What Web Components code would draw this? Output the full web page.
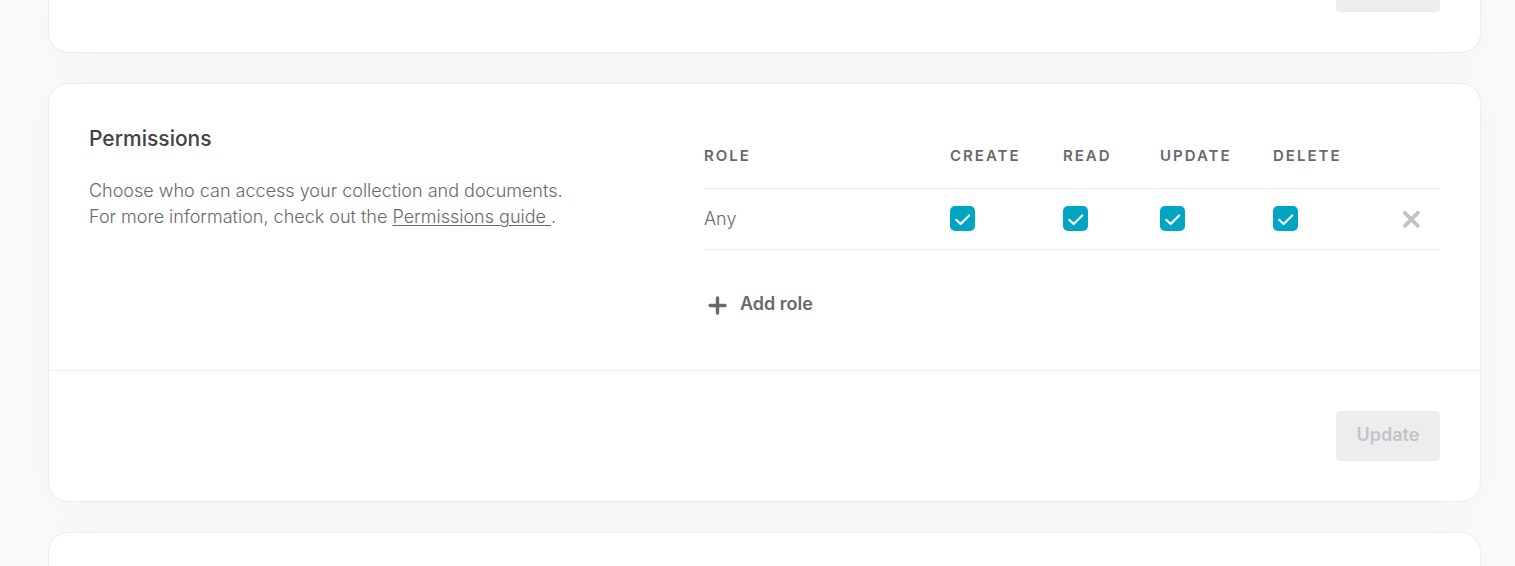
<!DOCTYPE html>
<html lang="en">
<head>
<meta charset="utf-8">
<title>Collection settings</title>
<style>
html { background: #fafafa; }
body { margin: 0; font-family: Inter, "Liberation Sans", sans-serif; font-size: 18px; line-height: 26px; color: #68686d; }
</style>
</head>
<body>
<settings-page></settings-page>

<template id="settings-page">
  <style>
    :host { display: block; }
    main { display: flex; flex-direction: column; gap: 30px; box-sizing: border-box; height: 100vh; overflow: hidden; padding: 0 34px 0 48px; }
    settings-card { flex: none; }
    settings-card[edge="bottom"] { flex: 1 0 0; }
    .clip { display: flex; height: 12px; align-items: flex-end; overflow: hidden; }
    h2 { margin: 0 0 24px; font-size: 21px; line-height: 30px; font-weight: 500; color: #414146; }
    p { margin: 0; font-weight: 300; }
    a { color: inherit; text-decoration: underline; text-underline-offset: 2px; text-decoration-thickness: 1px; white-space: pre; }
  </style>
  <main>
    <settings-card edge="top"><div class="clip" slot="footer"><action-button label="Update settings"></action-button></div></settings-card>
    <settings-card>
      <div slot="intro">
        <h2>Permissions</h2>
        <p>Choose who can access your collection and documents.<br>For more information, check out the <a href="#guide">Permissions guide </a>.</p>
      </div>
      <permission-table></permission-table>
      <action-button slot="footer">Update</action-button>
    </settings-card>
    <settings-card edge="bottom"></settings-card>
  </main>
</template>

<template id="settings-card">
  <style>
    :host { display: block; box-sizing: border-box; background: #fff; border: 1px solid #ededed; border-radius: 20px; box-shadow: 0 4px 50px rgba(0, 0, 0, .03); }
    .body { display: grid; grid-template-columns: 3fr 4fr; gap: 63px; padding: 40px; }
    footer { display: flex; justify-content: flex-end; padding: 40px; border-top: 1px solid #ededed; }
    :host([edge="top"]) { border-top: 0; border-radius: 0 0 20px 20px; }
    :host([edge="top"]) .body, :host([edge="bottom"]) .body, :host([edge="bottom"]) footer { display: none; }
    :host([edge="top"]) footer { border-top: 0; padding-top: 0; }
    :host([edge="bottom"]) { border-bottom: 0; border-radius: 20px 20px 0 0; }
  </style>
  <section>
    <div class="body"><slot name="intro"></slot><slot></slot></div>
    <footer><slot name="footer"></slot></footer>
  </section>
</template>

<template id="action-button">
  <style>
    :host { display: block; }
    button { box-sizing: border-box; display: block; width: 104px; height: 50px; padding: 0 0 2px; border: 0; border-radius: 4px; background: #ededf0; color: #c3c3c6; font: inherit; font-weight: 600; }
  </style>
  <button type="button" disabled><slot></slot></button>
</template>

<template id="permission-table">
  <style>
    :host { display: block; }
    table { width: 100%; table-layout: fixed; border-collapse: collapse; }
    th, td { padding: 0; text-align: left; border-bottom: 1px solid #ededed; }
    th { height: 64px; font-size: 15px; line-height: 20px; font-weight: 600; letter-spacing: 2px; text-transform: uppercase; }
    td { height: 60px; font-weight: 300; }
    .mid { width: 113px; }
    .read { width: 97px; }
    .last { width: 97px; }
    .tools { width: 70px; }
    .tools button { margin-left: 32px; }
    button { display: flex; align-items: center; padding: 0; border: 0; background: none; color: inherit; font: inherit; }
    .tools button { color: #c3c3c6; }
    .add { gap: 9px; margin: 40px 0 12px; font-weight: 600; line-height: 28px; }
    svg { display: block; }
  </style>
  <table>
    <thead><tr><th>Role</th><th class="mid">Create</th><th class="read">Read</th><th class="mid">Update</th><th class="last">Delete</th><th class="tools"></th></tr></thead>
    <tbody><tr>
      <td>Any</td>
      <td><check-box label="Create"></check-box></td>
      <td><check-box label="Read"></check-box></td>
      <td><check-box label="Update"></check-box></td>
      <td><check-box label="Delete"></check-box></td>
      <td class="tools"><button type="button" aria-label="Remove role"><svg width="18" height="18" viewBox="0 0 18 18" fill="none" stroke="currentColor" stroke-width="3.8" stroke-linecap="round"><path d="M2.8 2.8 15.8 15.8M15.8 2.8 2.8 15.8"/></svg></button></td>
    </tr></tbody>
  </table>
  <button class="add" type="button"><svg width="27" height="28" viewBox="0 0 27 28" fill="none" stroke="currentColor" stroke-width="3.4" stroke-linecap="round"><path d="M6.1 15.5H21M13.5 8V23"/></svg><span>Add role</span></button>
</template>

<template id="check-box">
  <style>
    :host { display: block; width: 25px; height: 26px; }
    label { display: grid; }
    input { appearance: none; grid-area: 1 / 1; margin: 0; width: 25px; height: 25px; border-radius: 5px; background: #fff; box-shadow: inset 0 0 0 1px #c3c3c6; }
    input:checked { background: #00a5c4; box-shadow: none; }
    svg { grid-area: 1 / 1; pointer-events: none; }
  </style>
  <label><input type="checkbox" checked><svg width="25" height="25" viewBox="0 0 25 25" fill="none" stroke="#fff" stroke-width="2.2" stroke-linecap="round" stroke-linejoin="round"><path d="M6.2 13.8 10.6 18 19.2 9.5"/></svg></label>
</template>

<script>
class TemplateElement extends HTMLElement {
  constructor() {
    super();
    this.attachShadow({ mode: "open" }).append(document.getElementById(this.localName).content.cloneNode(true));
  }
}
class LabelledElement extends TemplateElement {
  connectedCallback() {
    const label = this.getAttribute("label");
    if (label) this.shadowRoot.querySelector("button, input").setAttribute("aria-label", label);
  }
}
customElements.define("check-box", class extends LabelledElement {});
customElements.define("action-button", class extends LabelledElement {});
customElements.define("permission-table", class extends TemplateElement {});
customElements.define("settings-card", class extends TemplateElement {});
customElements.define("settings-page", class extends TemplateElement {});
</script>
</body>
</html>
